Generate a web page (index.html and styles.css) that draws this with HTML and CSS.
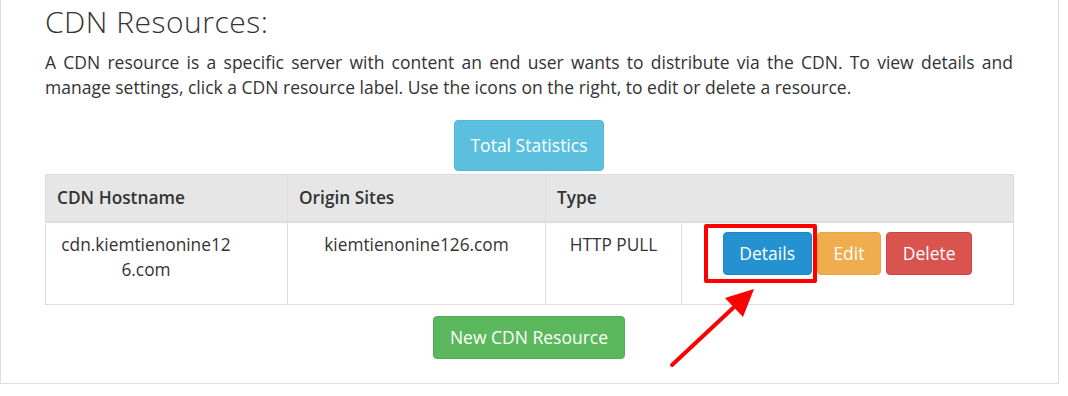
FILE: index.html
```html
<!DOCTYPE html>
<html>
<head>
<meta charset="UTF-8">
<title>CDN Resources</title>
<link rel="stylesheet" href="styles.css">
</head>
<body>
<div class="panel">
  <h2 class="page_title">CDN Resources:</h2>
  <p class="intro">A CDN resource is a specific server with content an end user wants to distribute via the CDN. To view details and manage settings, click a CDN resource label. Use the icons on the right, to edit or delete a resource.</p>

  <div class="center_row top_row">
    <a class="btn btn_info btn_tall">Total Statistics</a>
  </div>

  <table class="cdn_table">
    <colgroup>
      <col style="width:242px">
      <col style="width:258px">
      <col style="width:136px">
      <col style="width:332px">
    </colgroup>
    <tr>
      <th>CDN Hostname</th>
      <th>Origin Sites</th>
      <th colspan="2">Type</th>
    </tr>
    <tr>
      <td><div class="host_name">cdn.kiemtienonine126.com</div></td>
      <td class="centered">kiemtienonine126.com</td>
      <td class="centered">HTTP PULL</td>
      <td>
        <div class="actions">
          <span class="marked"><a class="btn btn_primary">Details</a></span>
          <a class="btn btn_warning">Edit</a>
          <a class="btn btn_danger">Delete</a>
        </div>
      </td>
    </tr>
  </table>

  <div class="center_row bottom_row">
    <a class="btn btn_success">New CDN Resource</a>
  </div>

  <!-- annotation arrow -->
  <svg class="arrow" width="100" height="90" viewBox="0 0 100 90">
    <line x1="11" y1="85" x2="72" y2="28" stroke="#ff0000" stroke-width="4" stroke-linecap="round"/>
    <polygon points="93,9 64,18 82,37" fill="#ff0000"/>
  </svg>
</div>
</body>
</html>
```

FILE: styles.css
```css
html, body {
  margin: 0px;
  background: #ffffff;
}

body {
  font-family: "Open Sans", "Liberation Sans", sans-serif;
  color: #333333;
}

.panel {
  position: relative;
  width: 1059px;
  box-sizing: border-box;
  border: 1px solid #dddddd;
  border-top: none;
  padding: 0 45px 24px 44px;
}

.page_title {
  margin: 0;
  padding-top: 4px;
  font-family: "Open Sans", sans-serif;
  font-weight: 300;
  font-size: 30px;
  line-height: 36px;
  letter-spacing: 0.5px;
  color: #333333;
}

.intro {
  margin: 10px 0 0 0;
  font-size: 17.5px;
  line-height: 25px;
  text-align: justify;
}

.center_row {
  display: flex;
  justify-content: center;
}

.top_row {
  margin-top: 20px;
  margin-bottom: 3px;
}

.bottom_row {
  margin-top: 11px;
}

.btn {
  display: inline-block;
  padding: 9px 15px;
  border: 1px solid transparent;
  border-radius: 4px;
  font-size: 17.5px;
  line-height: 23px;
  color: #ffffff;
  cursor: pointer;
  white-space: nowrap;
}

.btn_tall {
  padding: 12px 15px;
  line-height: 25px;
}

.btn_info {
  background: #5bc0de;
  border-color: #52b8d7;
}

.btn_primary {
  background: #2492d0;
  border-color: #1f88c4;
}

.btn_warning {
  background: #f0ad4e;
  border-color: #eea33e;
}

.btn_danger {
  background: #d9534f;
  border-color: #d34440;
}

.btn_success {
  padding: 9px 16px;
  background: #5cb85c;
  border-color: #52ad52;
}

.cdn_table {
  width: 968px;
  table-layout: fixed;
  border-collapse: collapse;
  font-size: 17.3px;
}

.cdn_table th {
  padding: 11px 11px;
  line-height: 24px;
  text-align: left;
  font-weight: 600;
  background: #e6e6e6;
  border: 1px solid #dddddd;
  border-bottom: 2px solid #dddddd;
}

.cdn_table td {
  padding: 9px 11px 22px 11px;
  line-height: 25px;
  vertical-align: top;
  border: 1px solid #dddddd;
}

.centered {
  text-align: center;
}

.host_name {
  width: 178px;
  text-align: center;
  word-break: break-all;
}

.actions {
  display: flex;
  justify-content: center;
  gap: 5px;
}

.actions .btn {
  padding: 9px 15.7px;
}

.marked {
  position: relative;
  display: inline-block;
}

.marked::after {
  content: "";
  position: absolute;
  left: -19px;
  right: -5px;
  top: -8px;
  bottom: -8px;
  border: 4px solid #ff0000;
  border-radius: 2px;
  pointer-events: none;
}

.arrow {
  position: absolute;
  left: 660px;
  top: 280px;
}
```
